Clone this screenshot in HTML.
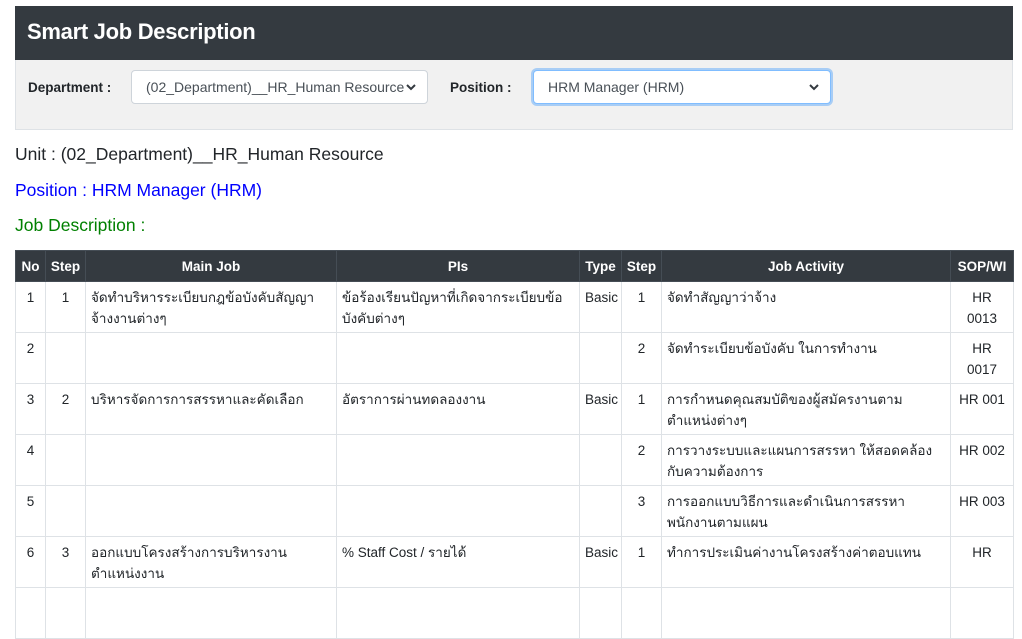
<!DOCTYPE html>
<html><head><meta charset="utf-8"><style>
*{box-sizing:border-box;margin:0;padding:0}
body{width:1022px;height:593px;overflow:hidden;background:#fff;font-family:"Liberation Sans","DejaVu Sans",sans-serif;color:#212529;position:relative}
.hdr{position:absolute;left:15px;top:6px;width:998px;height:54px;background:#343a40;color:#fff;font-size:22px;font-weight:bold;padding:13px 12px;letter-spacing:-0.3px}
.flt{position:absolute;left:15px;top:60px;width:998px;height:70px;background:#f1f1f1;border:1px solid #dee2e6;border-top:none}
.lbl{position:absolute;top:20px;font-size:13.5px;font-weight:bold;color:#212529}
.sel{position:absolute;top:10px;height:34px;background:#fff;border:1px solid #ced4da;border-radius:4px;font-size:14px;color:#495057;padding:8px 14px;white-space:nowrap}
.sel svg{position:absolute;right:10px;top:12px}
.foc{border-color:#80bdff;box-shadow:0 0 0 2px rgba(0,123,255,.3)}
.t{position:absolute;left:15px;font-size:17.5px}
table{position:absolute;left:15px;top:250px;width:998px;border-collapse:collapse;font-size:13.5px;table-layout:fixed}
th{background:#343a40;color:#fff;height:31px;font-weight:bold;border:1px solid #454d55;text-align:center;font-size:13.5px}
td{border:1px solid #dee2e6;height:51px;vertical-align:top;padding:5px 5px 0;line-height:21px}
.c{text-align:center}
</style></head><body>
<div class="hdr">Smart Job Description</div>
<div class="flt">
<div class="lbl" style="left:12px">Department :</div>
<div class="sel" style="left:115px;width:297px">(02_Department)__HR_Human Resource<svg width="12" height="8" viewBox="0 0 12 8"><path d="M2 2l4 4 4-4" stroke="#343a40" stroke-width="2" fill="none"/></svg></div>
<div class="lbl" style="left:434px">Position :</div>
<div class="sel foc" style="left:517px;width:298px">HRM Manager (HRM)<svg width="12" height="8" viewBox="0 0 12 8"><path d="M2 2l4 4 4-4" stroke="#343a40" stroke-width="2" fill="none"/></svg></div>
</div>
<div class="t" style="top:144px;color:#212529">Unit : (02_Department)__HR_Human Resource</div>
<div class="t" style="top:180px;color:#0000ff">Position : HRM Manager (HRM)</div>
<div class="t" style="top:215px;color:#008000">Job Description :</div>
<table>
<colgroup><col style="width:30px"><col style="width:40px"><col style="width:251px"><col style="width:243px"><col style="width:42px"><col style="width:40px"><col style="width:289px"><col style="width:63px"></colgroup>
<tr><th>No</th><th>Step</th><th>Main Job</th><th>PIs</th><th>Type</th><th>Step</th><th>Job Activity</th><th>SOP/WI</th></tr>
<tr><td class="c">1</td><td class="c">1</td><td>จัดทำบริหารระเบียบกฎข้อบังคับสัญญาจ้างงานต่างๆ</td><td>ข้อร้องเรียนปัญหาที่เกิดจากระเบียบข้อบังคับต่างๆ</td><td>Basic</td><td class="c">1</td><td>จัดทำสัญญาว่าจ้าง</td><td class="c">HR 0013</td></tr>
<tr><td class="c">2</td><td></td><td></td><td></td><td></td><td class="c">2</td><td>จัดทำระเบียบข้อบังคับ ในการทำงาน</td><td class="c">HR 0017</td></tr>
<tr><td class="c">3</td><td class="c">2</td><td>บริหารจัดการการสรรหาและคัดเลือก</td><td>อัตราการผ่านทดลองงาน</td><td>Basic</td><td class="c">1</td><td>การกำหนดคุณสมบัติของผู้สมัครงานตามตำแหน่งต่างๆ</td><td class="c">HR 001</td></tr>
<tr><td class="c">4</td><td></td><td></td><td></td><td></td><td class="c">2</td><td>การวางระบบและแผนการสรรหา ให้สอดคล้องกับความต้องการ</td><td class="c">HR 002</td></tr>
<tr><td class="c">5</td><td></td><td></td><td></td><td></td><td class="c">3</td><td>การออกแบบวิธีการและดำเนินการสรรหาพนักงานตามแผน</td><td class="c">HR 003</td></tr>
<tr><td class="c">6</td><td class="c">3</td><td>ออกแบบโครงสร้างการบริหารงานตำแหน่งงาน</td><td>% Staff Cost / รายได้</td><td>Basic</td><td class="c">1</td><td>ทำการประเมินค่างานโครงสร้างค่าตอบแทน</td><td class="c">HR</td></tr>
<tr><td></td><td></td><td></td><td></td><td></td><td></td><td></td><td></td></tr>
</table>
</body></html>
